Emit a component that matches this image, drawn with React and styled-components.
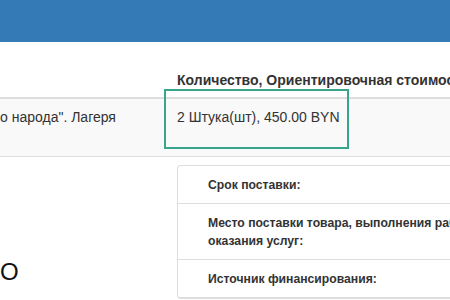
import React from 'react';
import styled, { createGlobalStyle } from 'styled-components';

const GlobalStyle = createGlobalStyle`
  html, body {
    margin: 0;
    padding: 0;
    width: 450px;
    height: 300px;
    overflow: hidden;
    background: #fff;
  }
  body {
    font-family: "Liberation Sans", Arial, sans-serif;
    font-size: 14px;
    line-height: 18px;
    color: #333;
  }
`;

const TopBar = styled.div`
  height: 42px;
  background-color: #337ab7;
`;

const Content = styled.div`
  position: relative;
  padding-top: 21px;
`;

const Table = styled.div`
  display: grid;
  grid-template-columns: 169px 1fr;
`;

const HeadCell = styled.div`
  padding: 8px 8px 8px ${({ $first }) => ($first ? '0' : '8px')};
  font-weight: bold;
  white-space: nowrap;
  border-bottom: 2px solid #ddd;
  display: flex;
  align-items: flex-end;
`;

const Cell = styled.div`
  height: 58px;
  padding: 9px 8px 0 ${({ $first }) => ($first ? '0' : '8px')};
  background-color: #f9f9f9;
  border-bottom: 1px solid #ddd;
  white-space: nowrap;
  box-sizing: border-box;
`;

const Highlight = styled.div`
  position: absolute;
  left: 164px;
  top: 47px;
  width: 185px;
  height: 60px;
  border: 2px solid #3aa58d;
  box-sizing: border-box;
`;

const Lower = styled.div`
  display: grid;
  grid-template-columns: 177px 1fr;
  margin-top: 8px;
`;

const Title = styled.h2`
  margin: 0;
  padding-top: 94px;
  font-size: 24px;
  line-height: 26px;
  font-weight: normal;
  color: #111;
`;

const List = styled.div`
  border: 1px solid #ddd;
  border-right: none;
  border-radius: 4px 0 0 4px;
`;

const Item = styled.div`
  padding: 10px 30px 9px;
  border-bottom: 1px solid #ddd;
  font-size: 12.2px;
  font-weight: bold;
  white-space: nowrap;
`;

export default function App() {
  return (
    <>
      <GlobalStyle />
      <TopBar />
      <Content>
        <Table>
          <HeadCell $first />
          <HeadCell>Количество, Ориентировочная стоимость</HeadCell>
          <Cell $first>о народа". Лагеря</Cell>
          <Cell>2 Штука(шт), 450.00 BYN</Cell>
        </Table>
        <Highlight />
        <Lower>
          <Title>О</Title>
          <List>
            <Item>Срок поставки:</Item>
            <Item>
              Место поставки товара, выполнения работ,
              <br />
              оказания услуг:
            </Item>
            <Item>Источник финансирования:</Item>
          </List>
        </Lower>
      </Content>
    </>
  );
}
